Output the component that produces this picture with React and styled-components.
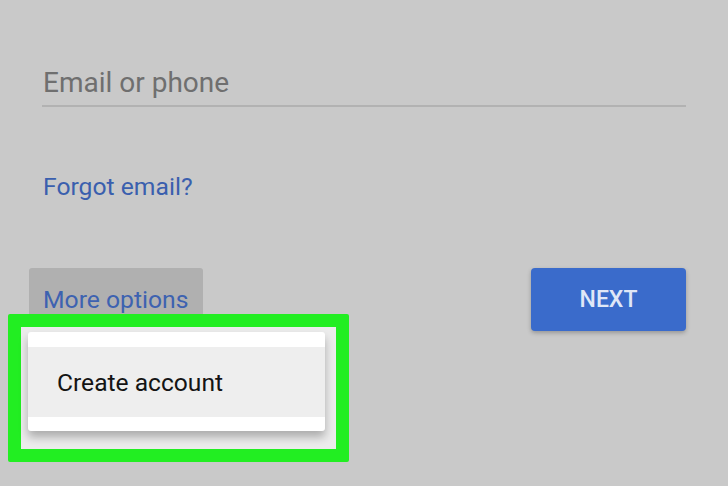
import React from "react";
import styled, { createGlobalStyle } from "styled-components";

const GlobalStyle = createGlobalStyle`
  html, body {
    margin: 0;
    padding: 0;
  }
  body {
    background: #c9c9c9;
    font-family: Roboto, "Liberation Sans", sans-serif;
  }
`;

export default function App() {
  return (
    <>
      <GlobalStyle />
      <Page>
        <Field>
          <Placeholder>Email or phone</Placeholder>
        </Field>
        <LinkText>Forgot email?</LinkText>
        <ActionRow>
          <MoreWrap>
            <MoreButton>More options</MoreButton>
            <Highlight />
            <Menu>
              <MenuItem>Create account</MenuItem>
            </Menu>
          </MoreWrap>
          <NextButton>NEXT</NextButton>
        </ActionRow>
      </Page>
    </>
  );
}

const Page = styled.div`
  width: 728px;
  height: 486px;
  box-sizing: border-box;
  padding: 64px 42px 0 0;
  overflow: hidden;
  display: flex;
  flex-direction: column;
`;

const Field = styled.div`
  margin-left: 42px;
  height: 41px;
  border-bottom: 2px solid #b2b2b2;
  display: flex;
  align-items: flex-start;
`;

const Placeholder = styled.div`
  padding-left: 1px;
  font-size: 28px;
  line-height: 38px;
  color: #6f6f6f;
`;

const LinkText = styled.div`
  margin-top: 64px;
  margin-left: 43px;
  font-size: 24.7px;
  line-height: 32px;
  color: #3a5fae;
`;

const ActionRow = styled.div`
  margin-top: 65px;
  margin-left: 29px;
  display: flex;
  justify-content: space-between;
  align-items: flex-start;
`;

const MoreWrap = styled.div`
  position: relative;
`;

const MoreButton = styled.div`
  width: 174px;
  height: 62px;
  box-sizing: border-box;
  padding-left: 14px;
  display: flex;
  align-items: center;
  border-radius: 3px;
  background: #b0b0b0;
  font-size: 24.7px;
  color: #3d62b0;
`;

const Highlight = styled.div`
  position: absolute;
  left: -21px;
  top: 46px;
  width: 341px;
  height: 148px;
  box-sizing: border-box;
  border: 13px solid #22ee22;
  border-radius: 2px;
  background: #ececec;
`;

const Menu = styled.div`
  position: absolute;
  left: -1px;
  top: 64px;
  width: 297px;
  box-sizing: border-box;
  padding: 15px 0 14px;
  border-radius: 3px;
  background: #ffffff;
  box-shadow: 0 6px 10px rgba(0, 0, 0, 0.28);
`;

const MenuItem = styled.div`
  height: 70px;
  box-sizing: border-box;
  padding-left: 29px;
  display: flex;
  align-items: center;
  background: #eeeeee;
  font-size: 24.6px;
  color: #141414;
`;

const NextButton = styled.div`
  width: 155px;
  height: 63px;
  display: flex;
  align-items: center;
  justify-content: center;
  border-radius: 4px;
  background: #3a6bcb;
  box-shadow: 0 2px 4px rgba(0, 0, 0, 0.25);
  font-size: 23px;
  font-weight: 500;
  color: #dfe7f7;
`;
